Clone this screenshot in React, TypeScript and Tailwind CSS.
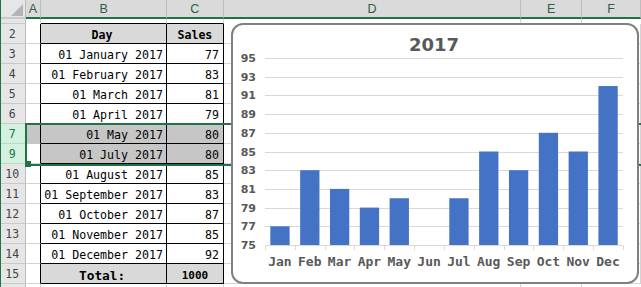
import React from "react";

const rows = [
  { n: "2", day: "Day", sales: "Sales", kind: "head" },
  { n: "3", day: "01 January 2017", sales: "77" },
  { n: "4", day: "01 February 2017", sales: "83" },
  { n: "5", day: "01 March 2017", sales: "81" },
  { n: "6", day: "01 April 2017", sales: "79" },
  { n: "7", day: "01 May 2017", sales: "80", sel: true },
  { n: "9", day: "01 July 2017", sales: "80", sel: true, active: true },
  { n: "10", day: "01 August 2017", sales: "85" },
  { n: "11", day: "01 September 2017", sales: "83" },
  { n: "12", day: "01 October 2017", sales: "87" },
  { n: "13", day: "01 November 2017", sales: "85" },
  { n: "14", day: "01 December 2017", sales: "92" },
  { n: "15", day: "Total:", sales: "1000", kind: "total" },
];

const months = [
  { m: "Jan", v: 77 },
  { m: "Feb", v: 83 },
  { m: "Mar", v: 81 },
  { m: "Apr", v: 79 },
  { m: "May", v: 80 },
  { m: "Jun", v: null },
  { m: "Jul", v: 80 },
  { m: "Aug", v: 85 },
  { m: "Sep", v: 83 },
  { m: "Oct", v: 87 },
  { m: "Nov", v: 85 },
  { m: "Dec", v: 92 },
];

const ticks = [95, 93, 91, 89, 87, 85, 83, 81, 79, 77, 75];

const yOf = (v: number) => 245 - (v - 75) * 9.35;
const x0 = 265;
const step = 29.83;

function Chart() {
  return (
    <div className="absolute left-[231px] top-[23px] z-10 h-[261px] w-[408px] rounded-[12px] border-2 border-[#808080] bg-white">
      <svg
        className="absolute left-[-2px] top-[-2px]"
        width={408}
        height={261}
        viewBox="231 23 408 261"
      >
        <text
          x={434}
          y={51}
          textAnchor="middle"
          fill="#595959"
          fontFamily="'DejaVu Sans', sans-serif"
          fontWeight="bold"
          fontSize={18}
        >
          2017
        </text>
        {ticks.map((t) => {
          const p = Math.round(yOf(t)) + 0.5;
          return (
            <g key={t}>
              <line x1={x0} x2={623} y1={p} y2={p} stroke="#d9d9d9" strokeWidth={1} />
              <text
                x={256}
                y={p + 3.5}
                textAnchor="end"
                fill="#595959"
                fontFamily="'DejaVu Sans', sans-serif"
                fontWeight="bold"
                fontSize={11}
              >
                {t}
              </text>
            </g>
          );
        })}
        {Array.from({ length: 13 }).map((_, i) => {
          const x = Math.round(x0 + i * step) + 0.5;
          return <line key={i} x1={x} x2={x} y1={245.5} y2={250} stroke="#d9d9d9" strokeWidth={1} />;
        })}
        {months.map((d, i) => {
          const cx = x0 + (i + 0.5) * step;
          return (
            <g key={d.m}>
              {d.v !== null && (
                <rect x={cx - 9.6} y={yOf(d.v)} width={19.3} height={245 - yOf(d.v)} fill="#4472c4" />
              )}
              <text
                x={cx}
                y={266}
                textAnchor="middle"
                fill="#595959"
                fontFamily="'DejaVu Sans Mono', monospace"
                fontWeight="bold"
                fontSize={13}
              >
                {d.m}
              </text>
            </g>
          );
        })}
      </svg>
    </div>
  );
}

function SheetRow({
  r,
}: {
  r: { n: string; day: string; sales: string; kind?: string; sel?: boolean; active?: boolean };
}) {
  const shaded = r.kind === "head" || r.kind === "total";
  const cellBg = r.sel ? "bg-[#c6c6c6]" : shaded ? "bg-[#d9d9d9]" : "bg-white";
  const bold = shaded ? "font-bold" : "";
  return (
    <div className="flex h-[20px]">
      <div
        className={`flex w-[26px] justify-center border-b border-r pt-[4px] text-[11.5px] leading-[13px] ${
          r.sel
            ? "border-b-[#b9d9c6] border-r-[#217346] bg-[#d3f0e0] text-[#217346]"
            : "border-b-[#c8c8c8] border-r-[#bdbdbd] bg-[#e6e6e6] text-[#444]"
        }`}
      >
        {r.n}
      </div>
      <div
        className={`w-[16px] border-b border-r border-r-black ${
          r.sel && !r.active ? "bg-[#c6c6c6] border-b-[#c6c6c6]" : "bg-white border-b-[#d4d4d4]"
        }`}
      />
      <div
        className={`flex w-[128px] border-b border-r border-black pr-[3px] pt-[4px] leading-[15px] ${cellBg} ${bold} ${
          shaded ? "justify-center" : "justify-end"
        } ${r.kind === "total" ? "text-[12.8px]" : "text-[11.6px]"}`}
      >
        {r.day}
      </div>
      <div
        className={`flex w-[58px] border-b border-r border-black pt-[4px] leading-[15px] ${cellBg} ${bold} ${
          shaded ? "justify-center" : "justify-end pr-[4px]"
        } ${r.kind === "total" ? "text-[11px]" : "text-[11.6px]"}`}
      >
        {r.sales}
      </div>
      <div className="w-[303px] border-b border-r border-[#d4d4d4]" />
      <div className="w-[62px] border-b border-r border-[#d4d4d4]" />
      <div className="w-[60px] border-b border-r border-[#d4d4d4]" />
    </div>
  );
}

export default function App() {
  const headers = [
    { l: "A", w: "w-[16px]" },
    { l: "B", w: "w-[128px]" },
    { l: "C", w: "w-[58px]" },
    { l: "D", w: "w-[303px]" },
    { l: "E", w: "w-[62px]" },
    { l: "F", w: "w-[60px]" },
  ];

  return (
    <div className="relative h-[287px] w-[641px] overflow-hidden bg-white font-['DejaVu_Sans_Mono',monospace] text-black">
      {/* column headers */}
      <div className="flex h-[19px] font-['Liberation_Sans',Arial,sans-serif]">
        <div className="relative w-[26px] border-b-2 border-r border-b-[#c8c8c8] border-r-[#bdbdbd] bg-[#e6e6e6]">
          <svg className="absolute left-[11px] top-[4px]" width={12} height={12} viewBox="0 0 12 12">
            <polygon points="12,0 12,12 0,12" fill="#b4b4b4" />
          </svg>
        </div>
        {headers.map((h) => (
          <div
            key={h.l}
            className={`${h.w} flex justify-center border-b-2 border-r border-b-[#217346] border-r-[#bdbdbd] bg-[#dadada] pt-[2px] text-[12.5px] leading-[14px] text-[#2b5e45]`}
          >
            {h.l}
          </div>
        ))}
      </div>

      {/* hidden row 1 */}
      <div className="flex h-[5px]">
        <div className="w-[26px] border-b border-r border-b-[#c8c8c8] border-r-[#bdbdbd] bg-[#e6e6e6]" />
        <div className="w-[16px] border-r border-[#d4d4d4]" />
        <div className="w-[128px] border-b border-r border-b-black border-r-[#d4d4d4]" />
        <div className="w-[58px] border-b border-r border-b-black border-r-[#d4d4d4]" />
        <div className="w-[303px] border-r border-[#d4d4d4]" />
        <div className="w-[62px] border-r border-[#d4d4d4]" />
        <div className="w-[60px]" />
      </div>

      {rows.map((r) => (
        <SheetRow key={r.n} r={r} />
      ))}

      {/* row 16 */}
      <div className="flex h-[20px]">
        <div className="w-[26px] border-r border-r-[#bdbdbd] bg-[#e6e6e6]" />
        <div className="w-[16px] border-r border-[#d4d4d4]" />
        <div className="w-[128px] border-r border-[#d4d4d4]" />
        <div className="w-[58px] border-r border-[#d4d4d4]" />
        <div className="w-[303px] border-r border-[#d4d4d4]" />
        <div className="w-[62px] border-r border-[#d4d4d4]" />
        <div className="w-[60px]" />
      </div>

      {/* window edge */}
      <div className="absolute left-0 top-0 h-full w-px bg-[#217346]" />

      {/* selection */}
      <div className="pointer-events-none absolute left-[25px] top-[123px] h-[43px] w-[700px] border-2 border-[#217346]" />
      <div className="absolute left-[25px] top-[161px] h-[6px] w-[6px] bg-[#217346]" />

      <Chart />
    </div>
  );
}
